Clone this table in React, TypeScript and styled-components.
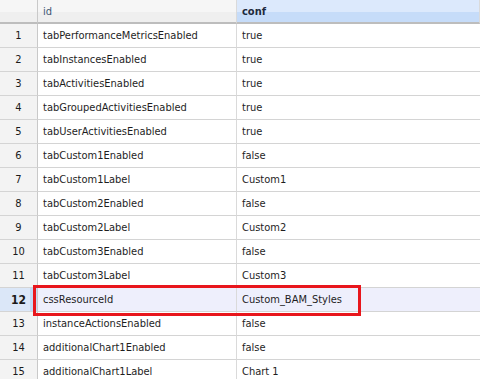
import React from "react";
import styled, { createGlobalStyle } from "styled-components";

const Global = createGlobalStyle`
  html, body { margin: 0; padding: 0; background: #ffffff; }
  body { font-family: "DejaVu Sans Condensed", "DejaVu Sans", sans-serif; }
`;

const Wrap = styled.div`
  position: relative;
  width: 480px;
  height: 379px;
  overflow: hidden;
  background: #ffffff;
`;

const Grid = styled.div`
  display: grid;
  grid-template-columns: 38px 199px 1fr;
  font-size: 11px;
  color: #1e1e1e;
`;

const HeadCell = styled.div<{ $blue?: boolean; $num?: boolean }>`
  height: 22px;
  display: flex;
  align-items: center;
  padding-left: ${(p) => (p.$num ? "0" : "5px")};
  border-bottom: 2px solid #bdbdbd;
  border-right: 1px solid ${(p) => (p.$num ? "#c9c9c9" : "#dadada")};
  background: ${(p) =>
    p.$blue
      ? "linear-gradient(#dce9fc 0, #dce9fc 12px, #c6dcf9 12px, #c6dcf9 100%)"
      : "linear-gradient(#f6f6f6 0, #f6f6f6 12px, #efefef 12px, #efefef 100%)"};
  color: ${(p) => (p.$blue ? "#1c2a3c" : "#3d5673")};
  font-weight: ${(p) => (p.$blue ? 700 : 400)};
  &:last-child { border-right: none; }
`;

const NumCell = styled.div<{ $sel?: boolean }>`
  height: 23px;
  display: flex;
  align-items: center;
  justify-content: center;
  border-bottom: 1px solid #d4d4d4;
  border-right: 1px solid #c9c9c9;
  background: ${(p) =>
    p.$sel ? "linear-gradient(90deg, #dbe7f8 0, #dbe7f8 30px, #c3d8f5 30px)" : "#f3f3f3"};
  font-weight: ${(p) => (p.$sel ? 700 : 400)};
  font-size: ${(p) => (p.$sel ? "12px" : "11px")};
  color: #1a1a1a;
`;

const Cell = styled.div<{ $sel?: boolean; $last?: boolean }>`
  height: 23px;
  display: flex;
  align-items: center;
  padding-left: 5px;
  border-bottom: 1px solid #d4d4d4;
  border-right: ${(p) => (p.$last ? "none" : "1px solid #dadada")};
  background: ${(p) => (p.$sel ? "#eeeffc" : "#ffffff")};
  white-space: nowrap;
  overflow: hidden;
`;

const Highlight = styled.div`
  position: absolute;
  left: 33px;
  top: 285px;
  width: 322px;
  height: 25px;
  border: 3px solid #e8161c;
  pointer-events: none;
`;

const rows: [string, string][] = [
  ["tabPerformanceMetricsEnabled", "true"],
  ["tabInstancesEnabled", "true"],
  ["tabActivitiesEnabled", "true"],
  ["tabGroupedActivitiesEnabled", "true"],
  ["tabUserActivitiesEnabled", "true"],
  ["tabCustom1Enabled", "false"],
  ["tabCustom1Label", "Custom1"],
  ["tabCustom2Enabled", "false"],
  ["tabCustom2Label", "Custom2"],
  ["tabCustom3Enabled", "false"],
  ["tabCustom3Label", "Custom3"],
  ["cssResourceId", "Custom_BAM_Styles"],
  ["instanceActionsEnabled", "false"],
  ["additionalChart1Enabled", "false"],
  ["additionalChart1Label", "Chart 1"],
];

export default function App() {
  return (
    <Wrap>
      <Global />
      <Grid>
        <HeadCell $num />
        <HeadCell>id</HeadCell>
        <HeadCell $blue>conf</HeadCell>
        {rows.map(([id, conf], i) => {
          const sel = i === 11;
          return (
            <React.Fragment key={id}>
              <NumCell $sel={sel}>{i + 1}</NumCell>
              <Cell $sel={sel}>{id}</Cell>
              <Cell $sel={sel} $last>
                {conf}
              </Cell>
            </React.Fragment>
          );
        })}
      </Grid>
      <Highlight />
    </Wrap>
  );
}
